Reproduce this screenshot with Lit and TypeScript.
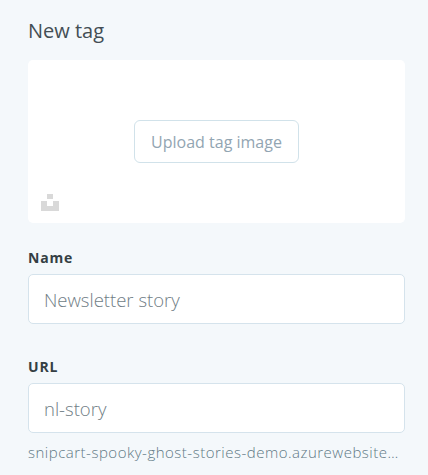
import { LitElement, html, css } from "lit";
import { customElement } from "lit/decorators.js";

@customElement("app-root")
export class AppRoot extends LitElement {
  static styles = css`
    :host {
      display: block;
      box-sizing: border-box;
      width: 428px;
      height: 475px;
      padding: 17px 23px 0 28px;
      background: #f4f8fb;
      font-family: "Open Sans", "Noto Sans", sans-serif;
      overflow: hidden;
    }
    .title {
      margin: 0;
      height: 27px;
      line-height: 27px;
      font-size: 20px;
      font-weight: 400;
      color: #434e54;
    }
    .card {
      position: relative;
      margin-top: 16px;
      height: 163px;
      background: #fff;
      border-radius: 5px;
      display: flex;
      align-items: center;
      justify-content: center;
    }
    .upload {
      box-sizing: border-box;
      width: 165px;
      height: 43px;
      border: 1px solid #d1e2ea;
      border-radius: 6px;
      background: #fff;
      color: #92a5b2;
      font: inherit;
      font-size: 16px;
      padding: 0;
    }
    .mark {
      position: absolute;
      left: 13px;
      bottom: 12px;
      width: 18px;
      height: 17px;
      display: block;
    }
    label {
      display: block;
      height: 18px;
      line-height: 18px;
      font-size: 14px;
      font-weight: 700;
      color: #343f44;
      letter-spacing: 0.8px;
    }
    .name-label { margin-top: 26px; }
    .url-label { margin-top: 34px; }
    .field {
      box-sizing: border-box;
      margin-top: 7px;
      height: 50px;
      border: 1px solid #d5e3ec;
      border-radius: 5px;
      background: #fff;
      padding: 0 15px;
      display: flex;
      align-items: center;
      font-size: 18.5px;
      font-weight: 300;
      color: #6f7d85;
    }
    .hint {
      margin-top: 9px;
      font-size: 15px;
      font-weight: 300;
      line-height: 20px;
      letter-spacing: 0.5px;
      color: #5f7885;
      white-space: nowrap;
      overflow: hidden;
      text-overflow: ellipsis;
      width: 372px;
    }
  `;

  render() {
    return html`
      <h1 class="title">New tag</h1>
      <div class="card">
        <button class="upload">Upload tag image</button>
        <svg class="mark" viewBox="0 0 18 17" aria-hidden="true">
          <path fill="#d9d9d9" d="M6 0h6v5H6zM0 7h6v5h6V7h6v10H0z" />
        </svg>
      </div>
      <label class="name-label">Name</label>
      <div class="field">Newsletter story</div>
      <label class="url-label">URL</label>
      <div class="field">nl-story</div>
      <div class="hint">snipcart-spooky-ghost-stories-demo.azurewebsites.net/tag/nl-story/</div>
    `;
  }
}
